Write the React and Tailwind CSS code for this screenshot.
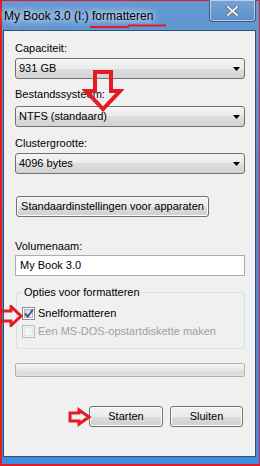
import React from 'react';

function Select({ value }) {
  return (
    <div className="flex h-[21px] w-[230px] items-center justify-between rounded-[3px] border border-[#707070] bg-[linear-gradient(#f4f4f4,#ebebeb_50%,#dedede_50%,#d2d2d2)] pl-[3px] pr-[4px]">
      <span>{value}</span>
      <svg width="7" height="4" viewBox="0 0 7 4">
        <path d="M0 0h7L3.5 4z" fill="#000" />
      </svg>
    </div>
  );
}

function WinButton({ children, className = '' }) {
  return (
    <div
      className={`flex h-[21px] items-center justify-center rounded-[3px] border border-[#707070] bg-[linear-gradient(#f2f2f2,#ebebeb_50%,#dddddd_50%,#cfcfcf)] shadow-[inset_0_0_0_1px_#fcfcfc] ${className}`}
    >
      {children}
    </div>
  );
}

function Checkbox({ checked, disabled }) {
  return (
    <div
      className={`flex h-[13px] w-[13px] items-center justify-center border ${
        disabled ? 'border-[#bcbcbc] bg-[#f4f4f4]' : 'border-[#8e8f8f] bg-white'
      }`}
    >
      <div
        className={`relative h-[9px] w-[9px] border ${
          disabled ? 'border-[#e3e3e3] bg-[#f4f4f4]' : 'border-[#aeb3b9] bg-linear-to-br from-[#cbcfd5] to-[#f6f6f6]'
        }`}
      >
        {checked && (
          <svg className="absolute -left-[2px] -top-[3px]" width="12" height="12" viewBox="0 0 12 12">
            <path d="M2 6.5 L4.8 9.5 L10 2.5" fill="none" stroke="#3d508c" strokeWidth="1.9" />
          </svg>
        )}
      </div>
    </div>
  );
}

export default function App() {
  return (
    <div className="relative h-[466px] w-[260px] border-b-2 border-l-2 border-r border-t border-[#e31b23] font-['Liberation_Sans',Arial,sans-serif] text-[11px] text-black">
      <div className="flex h-full flex-col bg-linear-to-b from-[#6398d3] via-[#4c87c9] to-[#3b8de0] pb-[7px] pl-px pr-[3px]">
        {/* title bar */}
        <div className="relative flex h-[29px] shrink-0 items-start pl-px pt-[8px]">
          <span className="text-[12px] leading-[14px] text-black [text-shadow:0_0_6px_#fff,0_0_10px_#fff]">
            My Book 3.0 (I:) formatteren
          </span>
          <div className="absolute right-0 top-[-1px] flex h-[22px] w-[47px] items-center justify-center rounded-b-[4px] border border-t-0 border-[#3b5f8c] bg-linear-to-b from-[#76a2d6] to-[#5f8fc9] shadow-[inset_0_0_0_1px_rgba(255,255,255,0.5)]">
            <svg width="13" height="10" viewBox="0 0 13 10">
              <path d="M2 1 L11 9 M11 1 L2 9" stroke="#55657a" strokeWidth="3.4" strokeLinecap="square" />
              <path d="M2 1 L11 9 M11 1 L2 9" stroke="#f2f2f2" strokeWidth="2" strokeLinecap="square" />
            </svg>
          </div>
        </div>

        {/* client area */}
        <div className="flex flex-1 flex-col border border-[#34506f] bg-[#f0f0f0] pl-[11px] pt-[10px]">
          <div className="leading-[15px]">Capaciteit:</div>
          <div className="mt-[2px]">
            <Select value="931 GB" />
          </div>

          <div className="mt-[8px] leading-[15px]">Bestandssysteem:</div>
          <div className="mt-[4px]">
            <Select value="NTFS (standaard)" />
          </div>

          <div className="mt-[9px] leading-[15px]">Clustergrootte:</div>
          <div className="mt-[2px]">
            <Select value="4096 bytes" />
          </div>

          <WinButton className="ml-px mt-[22px] w-[193px]">Standaardinstellingen voor apparaten</WinButton>

          <div className="mt-[22px] leading-[15px]">Volumenaam:</div>
          <div className="mt-px flex h-[21px] w-[230px] items-center border border-[#abadb3] bg-white pl-[4px]">
            My Book 3.0
          </div>

          {/* group box */}
          <div className="relative ml-px mt-[16px] h-[57px] w-[229px] rounded-[3px] border border-[#d5dfe5] pl-[5px] pt-[14px]">
            <span className="absolute -top-[8px] left-[5px] bg-[#f0f0f0] px-[2px] leading-[15px]">
              Opties voor formatteren
            </span>
            <div className="flex items-center gap-[3px]">
              <Checkbox checked />
              <span className="leading-[13px]">Snelformatteren</span>
            </div>
            <div className="mt-[5px] flex items-center gap-[3px]">
              <Checkbox disabled />
              <span className="leading-[13px] text-[#a0a0a0]">Een MS-DOS-opstartdiskette maken</span>
            </div>
          </div>

          {/* progress */}
          <div className="mt-[14px] h-[14px] w-[230px] rounded-[2px] border border-[#b2b2b2] bg-[linear-gradient(#f6f6f6,#e6e6e6_45%,#d9d9d9_80%,#e4e4e4)]" />

          <div className="ml-[74px] mt-[29px] flex gap-[7px]">
            <WinButton className="w-[74px]">Starten</WinButton>
            <WinButton className="w-[73px]">Sluiten</WinButton>
          </div>
        </div>
      </div>

      {/* red title underline */}
      <svg className="absolute left-[88px] top-[23px]" width="78" height="5" viewBox="0 0 78 5">
        <path d="M0 3 H39" stroke="#e31b23" strokeWidth="2" />
        <path d="M38 1.5 H76" stroke="#e31b23" strokeWidth="2" />
      </svg>

      {/* down arrow */}
      <svg className="absolute left-[80px] top-[68px]" width="42" height="45" viewBox="0 0 42 45">
        <path d="M13 3 H29 V22 H38 L21 40 L4 22 H13 Z" fill="none" stroke="#e31b23" strokeWidth="4" strokeLinejoin="miter" />
      </svg>

      {/* left arrow to checkbox */}
      <svg className="absolute left-[-2px] top-[304px]" width="25" height="22" viewBox="0 0 25 22">
        <path d="M0 6 H11 V1.5 L21 11 L11 20.5 V16 H0 Z" fill="none" stroke="#e31b23" strokeWidth="3" strokeLinejoin="miter" />
      </svg>

      {/* arrow to Starten */}
      <svg className="absolute left-[64px] top-[406px]" width="27" height="20" viewBox="0 0 27 20">
        <path d="M4 6 H13 V3 L23 10 L13 17 V14 H4 Z" fill="none" stroke="#e31b23" strokeWidth="3" strokeLinejoin="miter" />
      </svg>
    </div>
  );
}
